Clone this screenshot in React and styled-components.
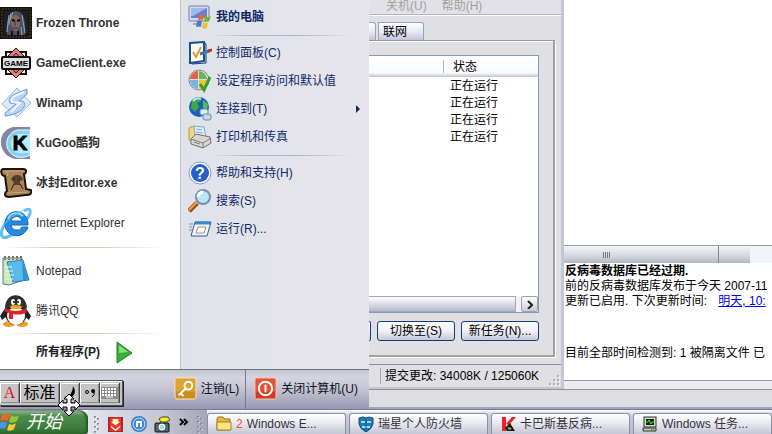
import React from 'react'
import styled, { createGlobalStyle } from 'styled-components'

const Global = createGlobalStyle`
  * {
    box-sizing: border-box;
  }

  body {
    margin: 0;
    background: #ffffff;
    font-family: "Liberation Sans", "Noto Sans CJK SC", sans-serif;
    font-size: 12px;
    line-height: 16px;
    overflow: hidden;
  }

  button {
    font: inherit;
    color: inherit;
    padding: 0;
    border: none;
    background: none;
    text-align: left;
    white-space: nowrap;
  }
`

const Screen = styled.div`
  min-height: 100vh;
  display: flex;
  flex-direction: column;
  position: relative;
`

const Desktop = styled.main`
  flex: 1;
  display: grid;
  grid-template-columns: 369px 195px minmax(0, 1fr);
  grid-template-rows: 1fr 20px;
`

// start menu

const StartMenu = styled.section`
  grid-row: 1 / 3;
  display: flex;
  flex-direction: column;
`

const MenuColumns = styled.div`
  flex: 1;
  display: grid;
  grid-template-columns: 180px 1fr;
`

const Programs = styled.nav`
  display: flex;
  flex-direction: column;
  padding-top: 3px;
  background: #ffffff;
`

const Places = styled.nav`
  display: flex;
  flex-direction: column;
  padding-top: 3px;
  border-left: 1px solid #bcc3cd;
  background: linear-gradient(90deg, #dfe3e9, #e7e5eb);
`

const ProgramItem = styled.button`
  height: 40px;
  display: flex;
  align-items: center;
  gap: 4px;
  color: #333333;
  font-weight: ${(p) => (p.$strong ? 'bold' : 'normal')};
`

const PlaceItem = styled.button`
  height: 28px;
  display: flex;
  align-items: center;
  gap: 4px;
  padding: 0 8px 0 7px;
  color: #10296b;
  font-weight: ${(p) => (p.$strong ? 'bold' : 'normal')};
`

const Grow = styled.span`
  flex: 1;
`

const Separator = styled.div`
  height: ${(p) => p.$height}px;
  padding: 0 14px 0 ${(p) => p.$left}px;
  display: flex;
  align-items: center;

  &::after {
    content: "";
    flex: 1;
    height: 1px;
    background: linear-gradient(90deg, transparent, ${(p) => p.$color} 30%, ${(p) => p.$color} 60%, transparent);
  }
`

const AllPrograms = styled.button`
  flex: 1;
  display: flex;
  align-items: center;
  gap: 16px;
  padding-left: 36px;
  color: #222222;
  font-weight: bold;
`

const MenuFooter = styled.div`
  height: 40px;
  display: flex;
  justify-content: flex-end;
  align-items: stretch;
  border-top: 1px solid #6f6f7c;
  background: linear-gradient(#c5c5d2, #d5d5e1 20%, #c3c3d3 50%, #9898b2);
`

const FooterButton = styled.button`
  display: flex;
  align-items: center;
  gap: 4px;
  padding: 0 ${(p) => p.$right}px 2px 8px;
  color: #11111c;
  border-left: ${(p) => (p.$line ? '1px solid #77778a' : 'none')};
`

// task manager

const TaskWindow = styled.section`
  display: flex;
  flex-direction: column;
  background: #e0dfe3;
  border-right: 3px solid #c5c5d8;
`

const MenuBar = styled.div`
  height: 16px;
  display: flex;
  align-items: flex-start;
  gap: 15px;
  padding-left: 17px;
  line-height: 12px;
  color: #a3a194;
  border-bottom: 1px solid #ffffff;
  box-shadow: inset 0 -1px #b4b3bd;
  background: #e2e1e9;
`

const Tabs = styled.div`
  display: flex;
  gap: 2px;
  margin-top: 6px;
`

const Tab = styled.button`
  height: 18px;
  width: ${(p) => p.$width}px;
  padding-left: ${(p) => (p.$width > 20 ? 4 : 0)}px;
  border: 1px solid #91a7b4;
  border-bottom: none;
  border-left-width: ${(p) => (p.$width > 20 ? 1 : 0)}px;
  border-radius: 0 3px 0 0;
  background: linear-gradient(#ffffff, #e9e9f4 50%, #c3c3dd);
  color: #000000;
`

const Pane = styled.div`
  flex: 1;
  display: flex;
  flex-direction: column;
  margin-right: 6px;
  padding: 14px 14px 14px 0;
  border-top: 1px solid #919b9c;
  border-right: 2px solid #a2a39f;
  border-bottom: 2px solid #a2a39f;
  box-shadow: inset 0 1px #ffffff, 1px 1px #ffffff;
`

const ListView = styled.div`
  flex: 1;
  display: flex;
  flex-direction: column;
  justify-content: space-between;
  border: 1px solid #7f9db9;
  border-left: none;
  background: #ffffff;
`

const TaskTable = styled.table`
  width: 100%;
  table-layout: fixed;
  border-collapse: collapse;
  color: #000000;

  th {
    height: 21px;
    padding: 0 0 0 9px;
    text-align: left;
    font-weight: normal;
    background: linear-gradient(#ffffff, #f8fafd 80%, #c5c3d2);
  }

  th:first-child {
    width: 75px;
    background: linear-gradient(#a5b4c8, #a5b4c8) 100% 50% / 1px 13px no-repeat, linear-gradient(#ffffff, #f8fafd 80%, #c5c3d2);
  }

  td {
    height: 17px;
    padding: 0 0 0 6px;
  }
`

const ScrollRow = styled.div`
  height: 16px;
  display: flex;
  gap: 5px;
  background: #f2f2f6;
`

const Thumb = styled.div`
  flex: 1;
  border: 1px solid #a5a5b8;
  border-left: none;
  background: linear-gradient(#ffffff, #dcdce8 50%, #b9b9ce);
`

const ScrollButton = styled.button`
  width: 17px;
  display: flex;
  align-items: center;
  justify-content: center;
  border: 1px solid #a0a0b2;
  border-radius: 2px;
  background: linear-gradient(#ffffff, #c9c9da);
`

const Actions = styled.div`
  display: flex;
  gap: 6px;
  margin-top: 8px;
`

const XpButton = styled.button`
  height: 20px;
  flex: 1;
  text-align: center;
  border: 1px solid #123f75;
  border-radius: 3px;
  background: linear-gradient(#ffffff, #f0f0f7 50%, #c7c7dc);
  color: #000000;
`

const XpButtonEdge = styled(XpButton)`
  flex: 0 0 2px;
  border-left: none;
  border-radius: 0 3px 3px 0;
`

const StatusBar = styled.footer`
  height: 25px;
  display: flex;
  align-items: center;
  margin-top: 7px;
  padding-left: 11px;
  border-top: 1px solid #8e8e99;
  border-bottom: 2px solid #c5c5d8;
  white-space: nowrap;
`

const StatusText = styled.span`
  flex: 1;
  padding-left: 4px;
  border-left: 1px solid #a9a89c;
`

const SizeGrip = styled.svg`
  align-self: flex-end;
`

// antivirus report

const Report = styled.section`
  display: flex;
  flex-direction: column;
  background: #ffffff;
  overflow: hidden;
`

const ReportBody = styled.div`
  flex: 1;
`

const HeaderBar = styled.div`
  height: 18px;
  display: grid;
  grid-template-columns: 155px 31px 1fr;
  border-top: 1px solid #9b9ba4;
`

const HeaderCell = styled.div`
  display: flex;
  align-items: center;
  padding-left: ${(p) => p.$left || 0}px;
  border-right: 1px solid #85858f;
  background: linear-gradient(#f5f5fa, #d5d5e0 60%, #b4b4c3);

  &:nth-child(2) {
    border-right: none;
  }

  &:last-child {
    background: #f2f2fa;
    border: none;
  }
`

const ReportText = styled.div`
  height: 118px;
  padding: 1px 0 0 1px;
  border-bottom: 1px solid #7f9db9;
  line-height: 15px;
  white-space: nowrap;
  color: #000000;

  p {
    margin: 0;
  }

  a {
    color: #0000ee;
    margin-left: 8px;
  }
`

const ReportNote = styled.p`
  && {
    padding-top: 37px;
  }
`

const ReportEdge = styled.div`
  height: 8px;
  background: #ececf0;
`

const WindowBottom = styled.div`
  grid-column: 2 / 4;
  border-top: 1px solid #909099;
  border-bottom: 2px solid #a3a3bb;
  background: #dedde2;
`

// task bar

const TaskBar = styled.footer`
  height: 25px;
  display: flex;
  overflow: hidden;
  border-top: 1px solid #77779a;
  box-shadow: inset 0 1px #ffffff;
  background: linear-gradient(#f3f3fa, #c9c9da 30%, #b9b9cc);
`

const StartButton = styled.button`
  flex: 0 0 88px;
  display: flex;
  align-items: center;
  gap: 6px;
  border-radius: 0 9px 4px 0;
  background: linear-gradient(#9cba9a, #4e8a4c 25%, #3d7f3d 70%, #2d6a2d);
  box-shadow: inset -2px 0 2px #245824;
  color: #ffffff;
  font-size: 18px;
  line-height: 22px;
  font-style: italic;
`

const QuickLaunch = styled.div`
  flex: 0 0 119px;
  display: flex;
  align-items: center;
  justify-content: space-between;
  padding: 4px 4px 0 6px;
  background: linear-gradient(90deg, #e3e3ec, #c7c7d5 60%, #a6a6b8);

  button {
    display: flex;
  }
`

const WindowList = styled.div`
  flex: 1;
  display: flex;
  gap: 3px;
  padding-top: 3px;
`

const WindowButton = styled.button`
  flex: 1 0 138px;
  display: flex;
  align-items: center;
  gap: 4px;
  padding-left: 8px;
  border: 1px solid #8e8ea3;
  border-bottom: none;
  border-radius: 3px 3px 0 0;
  background: linear-gradient(#ffffff, #ececf4 40%, #c6c6d6);
  color: #33333d;
`

const Count = styled.span`
  color: #f05030;
`

// input method bar, floats over the menu

const ImeBar = styled.div`
  position: absolute;
  left: 0;
  bottom: 28px;
  height: 26px;
  display: flex;
  padding: 2px 2px 2px 0;
  background: #c6c3c6;
  border: 1px solid #555555;
  border-left: none;
  box-shadow: inset 0 1px #ffffff, 1px 1px #222222;
`

const ImeButton = styled.button`
  width: ${(p) => p.$width}px;
  display: flex;
  align-items: center;
  justify-content: center;
  border-right: 1px solid #444444;
  box-shadow: inset 1px 1px #ffffff, inset -1px -1px #8a8a8a;
  color: ${(p) => p.$color || '#000000'};
  font-family: "Liberation Serif", "Noto Sans CJK SC", serif;
  font-size: 16px;
`

const MoveCursor = styled.svg`
  position: absolute;
  left: 57px;
  bottom: 17px;
`

const IconText = styled.text`
  font-family: "Liberation Sans", sans-serif;
  font-weight: bold;
  font-size: ${(p) => p.$size}px;
  text-anchor: middle;
`

const Icon = ({ size = 32, box = '0 0 32 32', children }) => (
  <svg width={size} height={size} viewBox={box} aria-hidden="true">{children}</svg>
)

const PortraitIcon = () => (
  <Icon>
    <rect width="32" height="32" fill="#17130d" />
    <rect x="2" y="2" width="28" height="28" fill="none" stroke="#54462a" strokeWidth="1" strokeDasharray="2 1" />
    <rect x="4" y="4" width="24" height="24" fill="#1d1f29" />
    <path d="M7 28C6 18 7 6 15 4c8-1 11 8 10 24z" fill="#4c505d" />
    <path d="M12 10l4-3 3 3 1 8-3 6h-2l-4-6z" fill="#7d6862" />
    <path d="M12 13l3 1M17 14l3-1" stroke="#150d11" strokeWidth="2" />
    <path d="M15 15v4M13 21h5" stroke="#4b2d2c" strokeWidth="1" />
    <path d="M9 8L7 25M22 8l3 18M11 6L9 18M21 20l1 8M13 5l-3 8" stroke="#9ba0ad" strokeWidth="1" />
    <path d="M12 24v4M18 24v4" stroke="#14141c" strokeWidth="2" />
  </Icon>
)

const GameIcon = () => (
  <Icon>
    <path d="M6 5h20v22H6z" fill="#fff" stroke="#111" strokeWidth="2" />
    <path d="M16 1L31 16 16 31 1 16z" fill="#f3796b" stroke="#111" />
    <path d="M16 6l9 10-9 10-9-10z" fill="#8587ed" stroke="#222" />
    <rect x="2" y="10" width="28" height="12" rx="1" fill="#dedede" stroke="#111" strokeWidth="2" />
    <IconText x="16" y="19" $size={8}>GAME</IconText>
  </Icon>
)

const WinampIcon = () => (
  <Icon>
    <path d="M17 1l14 15-14 14L2 17z" fill="#dcebfa" stroke="#93b7df" />
    <path d="M27 2L15 7c-5 2-7 6-5 9l6 1-11 9v3c9-1 16-4 19-9 2-4 0-6-5-6l8-7z" fill="#b9d5f4" stroke="#7297ce" />
    <path d="M24 5l-9 4c-3 2-4 4-3 6l8 1-9 9" fill="none" stroke="#eef7ff" strokeWidth="2" />
  </Icon>
)

const KugooIcon = () => (
  <Icon>
    <path d="M30 0H13C5 2 0 8 1 17c1 8 7 14 15 15h14z" fill="#8587a1" />
    <path d="M30 3H17a14 14 0 000 27c5 1 10 0 13-2z" fill="#82d4f5" stroke="#eff9ff" />
    <path d="M30 7H18a10 10 0 000 19h12z" fill="#b9ebfc" />
    <IconText x="20" y="23" $size={20} stroke="#000">K</IconText>
  </Icon>
)

const ScrollIcon = () => (
  <Icon>
    <path d="M3 2h20c4 0 4 4 1 5l2 15 5 1c1 4-1 5-5 5l-17 2c-5 0-5-4-2-6L5 9C1 9 0 3 3 2z" fill="#a98255" stroke="#1f130b" strokeWidth="2" />
    <path d="M4 4l4 2-1 3M8 26l20-1M7 4h17" stroke="#c9a578" strokeWidth="1" fill="none" />
    <path d="M11 13c1-6 11-7 12 0l-3 1v4h-6l-1-4z" fill="#574028" />
    <path d="M14 17l-3 6M20 17l3 5M13 12h2M18 12h2" stroke="#2d1d12" />
  </Icon>
)

const IeIcon = () => (
  <Icon>
    <path d="M24 4c7-5 8 1 3 8M7 14C-1 24 0 33 7 30c4-1 8-4 11-7" fill="none" stroke="#64bdf1" strokeWidth="3" />
    <path d="M28 18H11c1 6 9 7 11 2h6c-4 13-23 11-23-3C5 0 29 1 28 18zM11 14h11c-1-6-10-6-11 0z" fill="#238be0" stroke="#1769b9" />
    <path d="M8 12C10 6 18 4 23 9" stroke="#90d9ff" strokeWidth="2" fill="none" />
    <path d="M2 20C10 10 19 4 28 2" fill="none" stroke="#79c6f4" strokeWidth="1" />
  </Icon>
)

const NotepadIcon = () => (
  <Icon>
    <path d="M3 3h19l2 22-15 5-6-1z" fill="#cae8b8" stroke="#6472ad" />
    <path d="M7 7l16-2 6 20-16 2z" fill="#5cb9ea" stroke="#2686c3" />
    <path d="M22 4l6 20-5 2z" fill="#2c93d0" />
    <path d="M4 12h8M5 16h8M5 20h9M6 24h7" stroke="#e9ffe3" />
    <path d="M5 1v4M9 1v4M13 1v4M17 1v4M21 1v4" stroke="#7e7252" strokeWidth="2" strokeDasharray="2 1" />
  </Icon>
)

const QqIcon = () => (
  <Icon>
    <ellipse cx="9" cy="29" rx="6" ry="3" fill="#f69a22" />
    <ellipse cx="22" cy="29" rx="6" ry="3" fill="#f69a22" />
    <path d="M6 12l-6 9 2 4 5-4zM25 12l6 9-2 4-5-4z" fill="#222" />
    <ellipse cx="16" cy="18" rx="11" ry="12" fill="#222" />
    <ellipse cx="16" cy="21" rx="9" ry="9" fill="#fff" />
    <path d="M5 13C5-4 26-4 27 13z" fill="#303030" />
    <ellipse cx="13" cy="7" rx="2" ry="3" fill="#fff" />
    <ellipse cx="19" cy="7" rx="2" ry="3" fill="#fff" />
    <circle cx="14" cy="7" r="1" /><circle cx="18" cy="7" r="1" />
    <ellipse cx="16" cy="12" rx="6" ry="2" fill="#f6a51e" />
    <path d="M5 13c7 4 15 4 21 0l1 4c-4 3-10 3-14 2v5H9v-6l-5-2z" fill="#e51e28" />
  </Icon>
)

const WinFlag = ({ size = 20 }) => (
  <Icon size={size} box="0 0 20 20">
    <path d="M2 3c3-2 5-2 8 0L8 9c-2-1-5-1-8 0z" fill="#ee642d" />
    <path d="M11 3c3 2 5 2 8 0l-2 6c-3 2-5 2-8 1z" fill="#8ec83f" />
    <path d="M0 11c3-2 5-1 7 0l-2 6c-2-1-4-1-6 0z" fill="#4996e8" />
    <path d="M9 12c2 1 5 1 7-1l-2 6c-2 2-5 2-7 1z" fill="#f8cb32" />
  </Icon>
)

const ComputerIcon = () => (
  <Icon size={24} box="0 0 24 24">
    <rect x="1" y="1" width="20" height="15" rx="1" fill="#d7dbe5" stroke="#77819c" />
    <rect x="3" y="3" width="16" height="10" fill="#607fe0" />
    <path d="M3 3h16L5 11H3z" fill="#a1b7f2" />
    <path d="M5 18h6v2H5z" fill="#a4a8b7" />
    <path d="M11 10q3-2 5 0l-1 5q-3-1-5 0z" fill="#e6682b" />
    <path d="M17 11q3 2 6 0l-2 5q-2 1-5 0z" fill="#70b33b" />
    <path d="M9 16q3-1 5 0l-1 6q-3-1-5 0z" fill="#437bd5" />
    <path d="M15 17q3 2 5 0l-1 6q-3 1-5 0z" fill="#efbe31" />
  </Icon>
)

const ControlIcon = () => (
  <Icon size={24} box="0 0 24 24">
    <path d="M2 2l14-1v19L2 22z" fill="#f8fbff" stroke="#1c4e8e" strokeWidth="2" />
    <path d="M16 1l2 2v19L4 23" fill="none" stroke="#143d78" strokeWidth="1" />
    <path d="M5 11l3 5 5-10" fill="none" stroke="#eb9b1d" strokeWidth="2" />
    <path d="M12 13l9-3" stroke="#3677bc" strokeWidth="3" />
    <path d="M20 10l4-1" stroke="#bd3027" strokeWidth="3" />
  </Icon>
)

const ProgramsIcon = () => (
  <Icon size={24} box="0 0 24 24">
    <circle cx="11" cy="11" r="10" fill="#dedede" stroke="#888" />
    <path d="M10 10V2a9 9 0 00-8 8z" fill="#e56043" />
    <path d="M11 10V2a9 9 0 018 8z" fill="#62b95d" />
    <path d="M2 11h8v9a9 9 0 01-8-9z" fill="#76b3e0" />
    <path d="M11 11h9a9 9 0 01-9 9z" fill="#f2c43c" />
    <path d="M12 15l4 6 6-13" fill="none" stroke="#3c9d35" strokeWidth="3" />
  </Icon>
)

const ConnectIcon = () => (
  <Icon size={24} box="0 0 24 24">
    <circle cx="11" cy="10" r="10" fill="#1661bd" />
    <path d="M4 4c4-5 9-3 9 0l-4 2 2 4-4 5-4-4z" fill="#42a942" />
    <path d="M15 3l5 4-1 6-4-2z" fill="#55bd49" />
    <path d="M5 4q4-4 8-2" stroke="#bde8f7" strokeWidth="2" fill="none" />
    <rect x="12" y="12" width="8" height="6" rx="2" fill="#e1edf5" stroke="#6689a3" />
    <rect x="15" y="17" width="8" height="6" rx="2" fill="#c4dae8" stroke="#6689a3" />
  </Icon>
)

const PrinterIcon = () => (
  <Icon size={24} box="0 0 24 24">
    <path d="M1 3l4-2 3 2v15l-7-3z" fill="#f2d67a" stroke="#b4973f" />
    <path d="M6 1l10 1 2 10H7z" fill="#dff0fc" stroke="#8ba4b9" />
    <path d="M8 4l6 1M8 7l7 1" stroke="#6db4ea" />
    <path d="M3 14l5-5 14 3 1 6-8 5-12-4z" fill="#d8d6cd" stroke="#6f716f" />
    <path d="M3 14l12 4 8-5M15 18v5M6 17l6 2" fill="none" stroke="#7b7f82" />
  </Icon>
)

const HelpIcon = () => (
  <Icon size={24} box="0 0 24 24">
    <circle cx="12" cy="12" r="11" fill="#f7faff" stroke="#899cbb" />
    <circle cx="12" cy="12" r="9" fill="#2361c9" />
    <IconText x="12" y="18" $size={16} fill="#fff">?</IconText>
  </Icon>
)

const SearchIcon = () => (
  <Icon size={24} box="0 0 24 24">
    <path d="M1 22l8-8" stroke="#9d4e18" strokeWidth="5" />
    <path d="M1 21l8-8" stroke="#eda14d" strokeWidth="2" />
    <circle cx="15" cy="8" r="7" fill="#bae5fb" stroke="#778eaa" strokeWidth="2" />
    <path d="M10 8q0-4 5-5" stroke="#fff" strokeWidth="3" fill="none" />
  </Icon>
)

const RunIcon = () => (
  <Icon size={24} box="0 0 24 24">
    <path d="M7 5h16l-4 14H3z" fill="#eff4fb" stroke="#2c5f98" strokeWidth="1" />
    <path d="M7 6h15" stroke="#3e87cf" strokeWidth="3" />
    <path d="M10 10h8l-2 6H8z" fill="#fff" stroke="#a8966c" />
    <path d="M1 7h4M1 10h3M1 13h3" stroke="#8091a5" />
  </Icon>
)

const KeyIcon = () => (
  <Icon size={23} box="0 0 24 24">
    <rect x="1" y="1" width="22" height="22" rx="2" fill="#dda331" stroke="#f7e4b8" />
    <path d="M2 15h20v7H2z" fill="#cc8d20" />
    <circle cx="15" cy="9" r="4" fill="none" stroke="#fff" strokeWidth="2" />
    <path d="M12 12l-7 7M7 17l3 3" stroke="#fff" strokeWidth="2" />
  </Icon>
)

const PowerIcon = () => (
  <Icon size={23} box="0 0 24 24">
    <rect x="1" y="1" width="22" height="22" rx="2" fill="#e35335" stroke="#f7c5b5" />
    <path d="M2 15h20v7H2z" fill="#cd3b20" />
    <circle cx="12" cy="12" r="7" fill="none" stroke="#fff" strokeWidth="2" />
    <path d="M12 8v8" stroke="#fff" strokeWidth="2" />
  </Icon>
)

const ArrowIcon = () => (
  <svg width="17" height="23" viewBox="0 0 17 23" aria-hidden="true">
    <path d="M1 1l15 11L1 22z" fill="#39ac3c" stroke="#238326" />
    <path d="M3 4l9 7-9 1z" fill="#86df7d" />
  </svg>
)

const Grip = () => (
  <svg width="6" height="18" viewBox="0 0 6 18" aria-hidden="true">
    <path d="M1 1v17M4 3v15" stroke="#8686a0" strokeWidth="2" strokeDasharray="2 3" />
    <path d="M2 2v16M5 4v14" stroke="#fff" strokeDasharray="1 4" />
  </svg>
)

const FlashgetIcon = () => (
  <Icon size={15} box="0 0 16 16">
    <rect width="16" height="16" fill="#b32028" />
    <rect x="2" y="1" width="12" height="14" fill="#ea3535" />
    <path d="M5 2h6v3h2l-5 4-5-4h2zM3 9l5 4 5-4v2l-5 4-5-4z" fill="#fff4ba" />
  </Icon>
)

const MaxthonIcon = () => (
  <Icon size={16} box="0 0 16 16">
    <circle cx="8" cy="8" r="8" fill="#397cc6" />
    <circle cx="8" cy="8" r="6" fill="#3f8ad8" stroke="#d4e8fa" />
    <path d="M6 11V6h4v5" fill="none" stroke="#fff" strokeWidth="2" />
  </Icon>
)

const CameraIcon = () => (
  <Icon size={17} box="0 0 17 17">
    <path d="M5 3l3-2h6l2 3-4 2H7z" fill="#f7ee38" stroke="#4b481c" />
    <rect x="1" y="7" width="14" height="9" rx="1" fill="#52666b" stroke="#111" />
    <circle cx="8" cy="11" r="3" fill="#93e4e3" stroke="#fff" />
    <path d="M1 4h1M3 5h1" stroke="#eee029" strokeWidth="2" />
  </Icon>
)

const FolderIcon = () => (
  <Icon size={16} box="0 0 16 16">
    <path d="M1 3l1-2h5l2 2h5v11H1z" fill="#e7b938" stroke="#94712a" />
    <path d="M1 6h14v8H1z" fill="#ffe37c" stroke="#a67e29" />
  </Icon>
)

const ShieldIcon = () => (
  <Icon size={16} box="0 0 16 16">
    <path d="M1 2l4-1 3 1 3-1 4 1v6q-1 5-7 8-6-3-7-8z" fill="#2479b5" stroke="#124b7c" />
    <path d="M3 5h4v2H3zM9 5h4v2H9zM4 10h8v2H4z" fill="#8ee1f8" />
    <path d="M8 3v12" stroke="#1c5d93" />
  </Icon>
)

const KasperskyIcon = () => (
  <Icon size={16} box="0 0 16 16">
    <path d="M2 1h4v14H2zM6 8l6-7h4L9 9z" fill="#ee2027" />
    <path d="M5 12l5-5 5 8H7z" fill="#191b1a" />
    <path d="M8 12l3 1" stroke="#8fbd45" strokeWidth="2" />
  </Icon>
)

const TaskmgrIcon = () => (
  <Icon size={16} box="0 0 16 16">
    <rect x="2" y="1" width="12" height="10" fill="#d9d6c6" stroke="#333" />
    <rect x="4" y="3" width="8" height="6" fill="#052905" />
    <path d="M4 6h2l1-2 2 4 1-2h2" stroke="#35ec3b" fill="none" />
    <path d="M1 12h13v3H1z" fill="#c7c5b8" stroke="#333" />
    <path d="M9 14h3" stroke="#2e9a31" />
  </Icon>
)

const programs = [
  { name: 'Frozen Throne', icon: <PortraitIcon /> },
  { name: 'GameClient.exe', icon: <GameIcon /> },
  { name: 'Winamp', icon: <WinampIcon /> },
  { name: 'KuGoo酷狗', icon: <KugooIcon /> },
  { name: '冰封Editor.exe', icon: <ScrollIcon /> },
  { name: 'Internet Explorer', icon: <IeIcon />, plain: true },
]

const places = [
  { name: '控制面板(C)', icon: <ControlIcon /> },
  { name: '设定程序访问和默认值', icon: <ProgramsIcon /> },
  { name: '连接到(T)', icon: <ConnectIcon />, more: true },
  { name: '打印机和传真', icon: <PrinterIcon /> },
]

const tools = [
  { name: '帮助和支持(H)', icon: <HelpIcon /> },
  { name: '搜索(S)', icon: <SearchIcon /> },
  { name: '运行(R)...', icon: <RunIcon /> },
]

const tasks = [1, 2, 3, 4]

const Place = ({ item }) => (
  <PlaceItem>
    {item.icon}
    {item.name}
    {item.more && (
      <>
        <Grow />
        <svg width="5" height="8" viewBox="0 0 5 8" aria-hidden="true"><path d="M0 0l4 4-4 4z" fill="#10296b" /></svg>
      </>
    )}
  </PlaceItem>
)

const App = () => {
  return (
    <>
      <Global />
      <Screen>
        <Desktop>
          <StartMenu>
            <MenuColumns>
              <Programs>
                {programs.map((p) => (
                  <ProgramItem key={p.name} $strong={!p.plain}>{p.icon}{p.name}</ProgramItem>
                ))}
                <Separator $height={8} $left={4} $color="#d3cfbf" />
                <ProgramItem><NotepadIcon />Notepad</ProgramItem>
                <ProgramItem><QqIcon />腾讯QQ</ProgramItem>
                <Separator $height={4} $left={4} $color="#d3cfbf" />
                <AllPrograms>所有程序(P) <ArrowIcon /></AllPrograms>
              </Programs>

              <Places>
                <PlaceItem $strong><ComputerIcon />我的电脑</PlaceItem>
                <Separator $height={8} $left={28} $color="#a9b1cb" />
                {places.map((p) => <Place key={p.name} item={p} />)}
                <Separator $height={8} $left={28} $color="#a9b1cb" />
                {tools.map((p) => <Place key={p.name} item={p} />)}
              </Places>
            </MenuColumns>

            <MenuFooter>
              <FooterButton $right={6}><KeyIcon />注销(L)</FooterButton>
              <FooterButton $line $right={11}><PowerIcon />关闭计算机(U)</FooterButton>
            </MenuFooter>
          </StartMenu>

          <TaskWindow>
            <MenuBar>
              <span>关机(U)</span>
              <span>帮助(H)</span>
            </MenuBar>
            <Tabs>
              <Tab $width={7} aria-label="性能" />
              <Tab $width={46}>联网</Tab>
            </Tabs>
            <Pane>
              <ListView>
                <TaskTable>
                  <thead>
                    <tr><th></th><th>状态</th></tr>
                  </thead>
                  <tbody>
                    {tasks.map((t) => (
                      <tr key={t}><td></td><td>正在运行</td></tr>
                    ))}
                  </tbody>
                </TaskTable>
                <ScrollRow>
                  <Thumb />
                  <ScrollButton aria-label="向右">
                    <svg width="6" height="9" viewBox="0 0 6 9"><path d="M1 1l4 4-4 4" fill="none" stroke="#222" strokeWidth="2" /></svg>
                  </ScrollButton>
                </ScrollRow>
              </ListView>
              <Actions>
                <XpButtonEdge aria-label="结束任务" />
                <XpButton>切换至(S)</XpButton>
                <XpButton>新任务(N)...</XpButton>
              </Actions>
            </Pane>
            <StatusBar>
              <StatusText>提交更改: 34008K / 125060K</StatusText>
              <SizeGrip width="12" height="12" viewBox="0 0 12 12" aria-hidden="true">
                <path d="M8 0h2v2H8zM4 4h2v2H4zM8 4h2v2H8zM0 8h2v2H0zM4 8h2v2H4zM8 8h2v2H8z" fill="#b3b1a4" />
                <path d="M10 2h1M6 6h1M10 6h1M2 10h1M6 10h1M10 10h1" stroke="#fff" />
              </SizeGrip>
            </StatusBar>
          </TaskWindow>

          <Report>
            <ReportBody />
            <HeaderBar>
              <HeaderCell $left={39}>
                <svg width="8" height="6" viewBox="0 0 8 6" aria-hidden="true"><path d="M0 0h1v6H0zM2 0h1v6H2zM4 0h1v6H4zM6 0h1v6H6z" fill="#777788" /></svg>
              </HeaderCell>
              <HeaderCell />
              <HeaderCell />
            </HeaderBar>
            <ReportText>
              <p><b>反病毒数据库已经过期.</b></p>
              <p>前的反病毒数据库发布于今天 2007-11</p>
              <p>更新已启用. 下次更新时间: <a href="#update">明天, 10:</a></p>
              <ReportNote>目前全部时间检测到: 1 被隔离文件 已</ReportNote>
            </ReportText>
            <ReportEdge />
          </Report>

          <WindowBottom />
        </Desktop>

        <TaskBar>
          <StartButton><WinFlag />开始</StartButton>
          <QuickLaunch>
            <Grip />
            <button aria-label="FlashGet"><FlashgetIcon /></button>
            <button aria-label="Maxthon"><MaxthonIcon /></button>
            <button aria-label="Camera"><CameraIcon /></button>
            <svg width="10" height="12" viewBox="0 0 10 12" aria-hidden="true"><path d="M1 1l3 3-3 3M5 1l3 3-3 3" fill="none" stroke="#000" strokeWidth="2" /></svg>
            <Grip />
          </QuickLaunch>
          <WindowList>
            <WindowButton><FolderIcon /><Count>2</Count>Windows E...</WindowButton>
            <WindowButton><ShieldIcon />瑞星个人防火墙</WindowButton>
            <WindowButton><KasperskyIcon />卡巴斯基反病...</WindowButton>
            <WindowButton><TaskmgrIcon />Windows 任务...</WindowButton>
          </WindowList>
        </TaskBar>

        <ImeBar>
          <ImeButton $width={20} $color="#e01010">A</ImeButton>
          <ImeButton $width={40}>标准</ImeButton>
          <ImeButton $width={20} aria-label="半角">
            <svg width="16" height="16" viewBox="0 0 16 16"><path d="M11 1q5 8-3 12-4 1-6-1 9-1 9-11z" /></svg>
          </ImeButton>
          <ImeButton $width={20} aria-label="标点">
            <svg width="12" height="10" viewBox="0 0 12 10"><circle cx="3" cy="4" r="1.5" fill="none" stroke="#000" /><circle cx="9" cy="3" r="2" /><path d="M10 4q1 3-2 5" fill="none" stroke="#000" /></svg>
          </ImeButton>
          <ImeButton $width={20} aria-label="软键盘">
            <svg width="17" height="12" viewBox="0 0 17 12"><rect width="17" height="12" fill="#8c8c8c" /><path d="M1 2h15M1 5h15M1 8h15" stroke="#fff" strokeWidth="2" strokeDasharray="2 1" /><path d="M5 10h7" stroke="#fff" /></svg>
          </ImeButton>
        </ImeBar>

        <MoveCursor width="24" height="24" viewBox="0 0 24 24" aria-hidden="true">
          <path d="M12 1l5 5h-3v4h4V7l5 5-5 5v-3h-4v4h3l-5 5-5-5h3v-4H6v3l-5-5 5-5v3h4V6H7z" fill="#fff" stroke="#000" />
        </MoveCursor>
      </Screen>
    </>
  )
}

export default App
